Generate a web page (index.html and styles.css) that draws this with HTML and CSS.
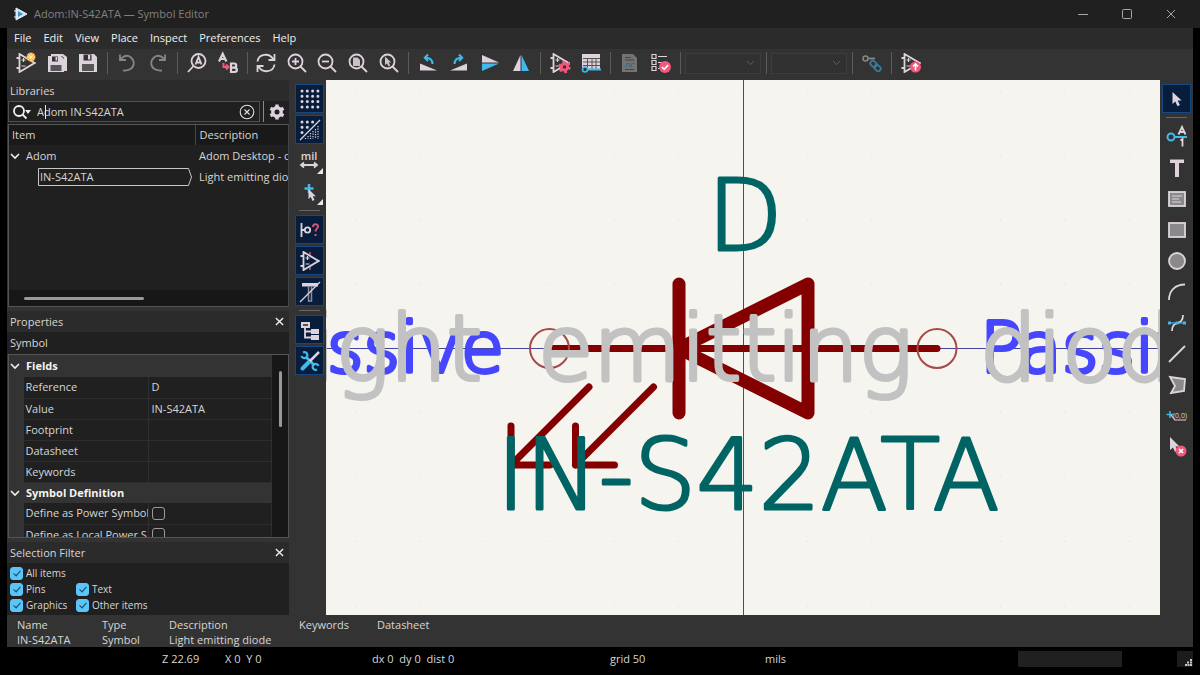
FILE: index.html
```html
<!DOCTYPE html>
<html lang="en">
<head>
<meta charset="utf-8">
<title>Adom:IN-S42ATA — Symbol Editor</title>
<link rel="stylesheet" href="styles.css">
</head>
<body>
<svg class="defs" aria-hidden="true">
  <symbol id="amp" viewBox="0 0 20 20"><path class="ln" d="M3.500 1v18l15-9zM.5 5h3M.5 15h3M17 10h2.500"/><path class="ln thin" d="M5.500 7h4M7.500 5v4M5.500 13h4"/></symbol>
  <symbol id="lens" viewBox="0 0 20 20"><circle class="ln" cx="8.500" cy="8.500" r="7"/><path class="ln" d="M13.500 13.500l5.500 5.500"/></symbol>
  <symbol id="pointer" viewBox="0 0 20 20"><path class="fl" d="M5.500 3v12l2.800-2.600 2.200 4.800 2.400-1.100-2.200-4.700h3.900z"/></symbol>
  <symbol id="x" viewBox="0 0 10 10"><path d="M1 1l8 8M9 1l-8 8"/></symbol>
  <symbol id="chev" viewBox="0 0 10 10"><path d="M1 3l4 4 4-4"/></symbol>
</svg>

<div class="window">
  <header class="titlebar">
    <svg class="app-icon" viewBox="0 0 14 14"><path d="M2 1l11 6-11 6z" fill="#cfe6f4" stroke="#e6eef4"/><path d="M0 4h4M0 10h4" stroke="#e6eef4"/><path d="M4 4l5 3-5 3z" fill="#3b93c8"/></svg>
    <h1>Adom:IN-S42ATA — Symbol Editor</h1>
    <div class="window-buttons">
      <button aria-label="Minimize"><svg viewBox="0 0 10 10"><path d="M0 5.500h10"/></svg></button>
      <button aria-label="Maximize"><svg viewBox="0 0 10 10"><rect x=".5" y=".5" width="9" height="9" rx="1"/></svg></button>
      <button aria-label="Close"><svg><use href="#x"/></svg></button>
    </div>
  </header>

  <div class="frame">
    <nav class="menubar">
      <button>File</button><button>Edit</button><button>View</button><button>Place</button><button>Inspect</button><button>Preferences</button><button>Help</button>
    </nav>

    <div class="toolbar" role="toolbar">
      <div class="group three">
        <button aria-label="New symbol"><svg class="ic"><use href="#amp"/><g transform="translate(15 4)"><circle r="4.500" fill="#f5a52a"/><path d="M0-4v8M-4 0h8M-3-3l6 6M3-3l-6 6" stroke="#fff0c8" stroke-width="1"/></g></svg></button>
        <button aria-label="Save all"><svg class="ic"><path class="fl" d="M4 1h12l4 3v14h-3V5l-2-2H4z"/><path class="fl" d="M1 3h13l3 3v13H1z"/><path fill="#333" d="M5 3.500h6v5H5z"/><path class="fl" d="M8.500 4h1.800v3.500H8.500z"/><path fill="#555" d="M3.500 12h11v6h-11z"/></svg></button>
        <button aria-label="Save"><svg class="ic"><path class="fl" d="M1 1h15l3 3v15H1z"/><path fill="#333" d="M5.500 1.500h8v6h-8z"/><path class="fl" d="M10 2h2.200v4.500H10z"/><path fill="#555" d="M4 11h12v7H4z"/></svg></button>
      </div>
      <i class="sep"></i>
      <div class="group two">
        <button aria-label="Undo"><svg class="ic dim"><path class="ln" d="M3 1.500V7h6M3.500 6.500C7 2.500 11 2 14 4.500c4 3.500 3.500 9-.5 11.500-2.500 1.500-5 1.800-7.500 1.500"/></svg></button>
        <button aria-label="Redo"><svg class="ic dim"><path class="ln" d="M17 1.500V7h-6M16.500 6.500C13 2.500 9 2 6 4.500c-4 3.500-3.500 9 .5 11.500 2.500 1.500 5 1.800 7.500 1.500"/></svg></button>
      </div>
      <i class="sep"></i>
      <div class="group two">
        <button aria-label="Find"><svg class="ic"><circle class="ln" cx="11.500" cy="8" r="7"/><path class="ln" d="M6.500 13l-5.500 6"/><path class="ln" d="M8.500 11.500l3-7.500 3 7.500M9.500 9.500h4"/></svg></button>
        <button aria-label="Find and replace"><svg class="ic"><path class="ln bold" d="M1 8.500L4.700.8l3.700 7.700M2.300 6h4.800M13 10.500v8.500h3.500c3.200 0 3.200-4.300 0-4.300H13h3c3 0 3-4.200 0-4.200z"/><path d="M5.500 10v4H10M8 11.500l2.500 2.500L8 16.500" fill="none" stroke="#f2587c" stroke-width="2"/></svg></button>
      </div>
      <i class="sep"></i>
      <div class="group five">
        <button aria-label="Refresh"><svg class="ic"><path class="ln" d="M1.500 8.500C2.500 1 13 -1 17.500 6.500M18.500 1v6h-6M18.500 11.500C17.500 19 7 21 2.500 13.500M1.500 19v-6h6"/></svg></button>
        <button aria-label="Zoom in"><svg class="ic"><use href="#lens"/><path class="ln" d="M5 8.500h7M8.500 5v7"/></svg></button>
        <button aria-label="Zoom out"><svg class="ic"><use href="#lens"/><path class="ln" d="M5 8.500h7"/></svg></button>
        <button aria-label="Zoom to fit"><svg class="ic"><use href="#lens"/><path d="M5 4.500h4.500l2.500 2.500v6H5z" fill="#c9c2c8"/></svg></button>
        <button aria-label="Zoom to selection"><svg class="ic"><use href="#lens"/><path d="M6 3.500v8.500l2-1.600 1.600 3 1.600-.8-1.500-3h2.600z" fill="#c9c2c8"/></svg></button>
      </div>
      <i class="sep"></i>
      <div class="group four">
        <button aria-label="Rotate counterclockwise"><svg class="ic"><path class="fl" d="M2 10.500v7h17z"/><path class="bl" d="M14.500 11c0-4.500-3-6.500-7.500-6.200M10 1.500L6.800 4.800 10 8"/></svg></button>
        <button aria-label="Rotate clockwise"><svg class="ic"><path class="fl" d="M18 10.500v7H1z"/><path class="bl" d="M5.500 11c0-4.500 3-6.500 7.500-6.200M10 1.500l3.200 3.300L10 8"/></svg></button>
        <button aria-label="Mirror vertically"><svg class="ic"><path class="fl" d="M2 2l17 7.500H2z"/><path fill="#42b8eb" d="M2 10.500h17L2 18z"/></svg></button>
        <button aria-label="Mirror horizontally"><svg class="ic"><path class="fl" d="M9.500 2v16H2z"/><path fill="#42b8eb" d="M10.500 2v16H18z"/></svg></button>
      </div>
      <i class="sep"></i>
      <div class="group two">
        <button aria-label="Symbol properties"><svg class="ic"><use href="#amp"/><circle cx="14.500" cy="14" r="3.200" fill="#333" stroke="#f2587c" stroke-width="3"/><circle cx="14.500" cy="14" r="5" fill="none" stroke="#f2587c" stroke-width="2.400" stroke-dasharray="2.600 2.630"/></svg></button>
        <button aria-label="Pin table"><svg class="ic"><path class="fl" d="M1 1h18v15H1z"/><path d="M2 5.500h17M2 9h17M2 12.500h17M6.500 5v11M11 5v11M15 5v11" stroke="#555" /><circle cx="4" cy="16.500" r="2.500" fill="#333" stroke="#42b8eb" stroke-width="1.600"/><path class="bl" d="M6.500 16.500H20"/></svg></button>
      </div>
      <i class="sep"></i>
      <div class="group two">
        <button aria-label="Show datasheet" disabled><svg class="ic"><path d="M2 1h11l4 4v14H2z" fill="#737373"/><path d="M5 4.500h6M5 7h9M5 16.500h9" stroke="#444"/><path d="M4.500 13.500h2v-3h3v3h2v-3h3" fill="none" stroke="#2f6c88"/></svg></button>
        <button aria-label="Check symbol"><svg class="ic"><path class="ln thin" d="M1 1.500h4v4H1zM1 7.500h4v4H1zM1 13.500h4v4H1zM7 3.500h9M7 9.500h5M7 15.500h2"/><circle cx="14" cy="14" r="6" fill="#f2587c"/><path d="M11 14l2.200 2.300 4-4.300" fill="none" stroke="#fff" stroke-width="1.700"/></svg></button>
      </div>
      <i class="sep"></i>
      <select disabled aria-label="Body style"><option></option></select>
      <i class="sep"></i>
      <select disabled aria-label="Unit"><option></option></select>
      <i class="sep"></i>
      <button aria-label="Synchronized pins mode" disabled><svg class="ic"><circle cx="3.500" cy="5.500" r="2.500" fill="none" stroke="#888" stroke-width="1.500"/><path d="M6 5.500h7" stroke="#888" stroke-width="1.800"/><g fill="none" stroke="#3a7b98" stroke-width="1.800"><rect x="8" y="8.500" width="7" height="5" rx="2.500" transform="rotate(45 11.500 11)"/><rect x="12" y="12.500" width="7" height="5" rx="2.500" transform="rotate(45 15.500 15)"/></g></svg></button>
      <i class="sep"></i>
      <button aria-label="Add symbol to schematic"><svg class="ic"><use href="#amp"/><circle cx="14.500" cy="14" r="5.500" fill="#f2587c"/><path d="M14.500 17.500v-6M12 13.500l2.500-2.500 2.500 2.500" fill="none" stroke="#fff" stroke-width="1.600"/></svg></button>
    </div>

    <main class="workspace">
      <aside class="side">
        <section class="libraries">
          <h2>Libraries</h2>
          <div class="search-row">
            <label class="search">
              <svg class="search-icon" viewBox="0 0 20 16"><circle cx="7" cy="7" r="5"/><path d="M10.500 10.500l4 4"/><path class="tri" d="M13 6h6l-3 4z"/></svg>
              <input type="text" value="Adom IN-S42ATA" aria-label="Search libraries">
              <i class="caret"></i>
              <button aria-label="Clear search"><svg viewBox="0 0 16 16"><circle cx="8" cy="8" r="6.800"/><path d="M5.500 5.500l5 5M10.500 5.500l-5 5"/></svg></button>
            </label>
            <button class="gear" aria-label="Library options"><svg viewBox="0 0 16 16"><circle cx="8" cy="8" r="4.200" stroke-width="3.400"/><path stroke-width="3.400" d="M8 .5v3M8 12.500v3M1.500 4.250l2.600 1.500M11.900 10.250l2.600 1.500M1.500 11.750l2.600-1.500M11.900 5.750l2.600-1.500"/></svg></button>
          </div>
          <div class="tree">
            <table>
              <thead><tr><th>Item</th><th>Description</th></tr></thead>
              <tbody>
                <tr><td><svg class="chev"><use href="#chev"/></svg><span>Adom</span></td><td>Adom Desktop - c</td></tr>
                <tr><td class="leaf"><div class="picked"><svg viewBox="0 0 154 18" preserveAspectRatio="none"><path d="M.5.5h150l3 8.500-3 8.500H.5z"/></svg>IN-S42ATA</div></td><td>Light emitting diode</td></tr>
              </tbody>
            </table>
            <div class="hscroll"><i></i></div>
          </div>
        </section>

        <section class="properties">
          <h2>Properties<button aria-label="Close properties"><svg><use href="#x"/></svg></button></h2>
          <p>Symbol</p>
          <div class="propgrid">
            <table>
              <colgroup><col class="c-gutter"><col class="c-name"><col></colgroup>
              <tbody>
                <tr class="section"><th colspan="3"><svg class="chev"><use href="#chev"/></svg><span>Fields</span></th></tr>
                <tr><td class="gutter"></td><td>Reference</td><td>D</td></tr>
                <tr><td class="gutter"></td><td>Value</td><td>IN-S42ATA</td></tr>
                <tr><td class="gutter"></td><td>Footprint</td><td></td></tr>
                <tr><td class="gutter"></td><td>Datasheet</td><td></td></tr>
                <tr><td class="gutter"></td><td>Keywords</td><td></td></tr>
                <tr class="section"><th colspan="3"><svg class="chev"><use href="#chev"/></svg><span>Symbol Definition</span></th></tr>
                <tr><td class="gutter"></td><td><label for="power">Define as Power Symbol</label></td><td><input type="checkbox" id="power"></td></tr>
                <tr><td class="gutter"></td><td><label for="local">Define as Local Power S</label></td><td><input type="checkbox" id="local"></td></tr>
              </tbody>
            </table>
            <div class="vscroll"><i></i></div>
          </div>
        </section>

        <section class="filter">
          <h2>Selection Filter<button aria-label="Close selection filter"><svg><use href="#x"/></svg></button></h2>
          <div class="checks">
            <label class="wide"><input type="checkbox" checked>All items</label>
            <label><input type="checkbox" checked>Pins</label>
            <label><input type="checkbox" checked>Text</label>
            <label><input type="checkbox" checked>Graphics</label>
            <label><input type="checkbox" checked>Other items</label>
          </div>
        </section>
      </aside>

      <div class="tools left" role="toolbar">
        <button class="on" aria-label="Show grid"><svg class="ic"><path class="dots" d="M2 2h17M2 7.300h17M2 12.600h17M2 17.900h17"/></svg></button>
        <button class="on" aria-label="Grid overrides"><svg class="ic"><path class="dots" d="M2 2h12M2 7.300h7M2 12.600h3"/><path class="ln thin" d="M0 20L20 0"/><path class="fine" d="M18 6v13M15.500 9v10M13 11v8M10.500 13v6M8 16v3M5.500 18v1"/></svg></button>
        <button class="more" aria-label="Units: mil"><svg class="ic"><text x="9" y="9" text-anchor="middle" class="mil">mil</text><path class="ln" d="M1 14h16M4 11.500L1 14l3 2.500M14 11.500l3 2.500-3 2.500"/></svg></button>
        <button class="more" aria-label="Cursor shape"><svg class="ic"><path d="M9 2v9M4.500 6.500h9" stroke="#42b8eb" stroke-width="2.500"/><path class="fl" d="M8.500 7v10l2.300-2 1.700 4 2-1-1.700-3.700h3z"/></svg></button>
        <i class="sep"></i>
        <button class="on" aria-label="Show pin electrical types"><svg class="ic"><path class="ln" d="M1.500 3v14M2 10h3"/><circle class="ln" cx="7.500" cy="10" r="2.700"/><path d="M13 7c0-3.500 5-3.500 5-.5 0 2-2.500 2.300-2.500 5M15.500 14v2" fill="none" stroke="#d8506f" stroke-width="2"/></svg></button>
        <button class="on" aria-label="Show hidden pins"><svg class="ic"><path d="M10 1v4M10 15v4" stroke="#d8506f" stroke-width="1.500"/><use href="#amp"/></svg></button>
        <button class="on" aria-label="Show hidden fields"><svg class="ic"><path class="fl" d="M2 1h16v3.500H2z"/><path d="M8.500 4.500V19h3V4.500" fill="none" stroke="#8e8c98" stroke-width="1.500"/><path class="ln thin" d="M0 20L20 0"/></svg></button>
        <i class="sep"></i>
        <button class="on" aria-label="Show library tree"><svg class="ic"><path class="fl" d="M1 2h9v6H1zM11 9h8v5h-8zM11 15h8v5h-8z"/><path d="M3 4h5v2H3z" fill="#555"/><path class="ln" d="M5 8v9.500h6M5 11.500h6"/></svg></button>
        <button class="on" aria-label="Show properties"><svg class="ic"><path d="M5.500 5.500l9 9" stroke="#42b8eb" stroke-width="3"/><path d="M3 1.500a3 3 0 1 1-1.500 3.500M17 18.500a3 3 0 1 1 1.500-3.500" fill="none" stroke="#42b8eb" stroke-width="2.200"/><path d="M19 1l-9.500 9.500" stroke="#ded3dd" stroke-width="2.500"/><path d="M8.500 11.500l-6 6" stroke="#42b8eb" stroke-width="4" stroke-linecap="round"/></svg></button>
      </div>

      <svg class="canvas" viewBox="326 80 834 535" preserveAspectRatio="xMidYMid slice">
        <g class="grid-dots">
          <path d="M356 219.500H1160M356 284H1160M356 412.500H1160M356 477H1160M356 541.500H1160M356 606H1160M356 155H1160M356 91H1160"/>
        </g>
        <path class="cross" d="M743.500 80V615M326 348.500H1160"/>
        <g class="pin-type">
          <text x="504" y="372" text-anchor="end">Passive</text>
          <text x="980" y="372">Passive</text>
        </g>
        <g class="body">
          <path class="thick" d="M679 284v129M808 284v129L679 348.500z"/>
          <path d="M549.500 348.500H937M589 387l-78 78M511 426v39h39M653.500 387l-78 78M575.500 426v39h39"/>
        </g>
        <g class="pin-end"><circle cx="549.500" cy="348.500" r="19.500"/><circle cx="937" cy="348.500" r="19.500"/></g>
        <g class="value">
          <text x="745" y="250" text-anchor="middle">D</text>
          <text x="748" y="509" text-anchor="middle">IN-S42ATA</text>
        </g>
        <g class="desc">
          <text x="482" y="380" text-anchor="end">Light</text>
          <text x="538" y="380">emitting</text>
          <text x="980" y="380">diode</text>
        </g>
      </svg>

      <div class="tools right" role="toolbar">
        <button class="on" aria-label="Select"><svg class="ic"><use href="#pointer"/></svg></button>
        <i class="sep"></i>
        <div class="stack">
          <button aria-label="Add pin"><svg class="ic"><circle class="bl" cx="4" cy="10" r="3.500"/><path class="bl" d="M7.500 10H20"/><path class="ln" d="M11.500 7.500L15 0l3.500 7.500M12.500 5h5M13.500 13.500L15.500 12v7.500"/></svg></button>
          <button aria-label="Add text"><svg class="ic"><path class="fl" d="M3 1.500h14V5h-5v14H8V5H3z"/></svg></button>
          <button aria-label="Add text box"><svg class="ic"><rect class="shape" x="2" y="3" width="16" height="14"/><path class="ln thin" d="M5 7h10M5 10h7M5 13h9"/></svg></button>
          <button aria-label="Add rectangle"><svg class="ic"><rect class="shape" x="2" y="3" width="16" height="14"/></svg></button>
          <button aria-label="Add circle"><svg class="ic"><circle class="shape" cx="10" cy="10" r="8"/></svg></button>
          <button aria-label="Add arc"><svg class="ic"><path class="ln" d="M2 18C2 9 8 2.500 18 2.500"/></svg></button>
          <button aria-label="Add bezier"><svg class="ic"><path class="ln" d="M5 18c0-12 11-4 11-16"/><path class="bl thin" d="M2 10h16"/><path d="M1 8.500h3v3H1zM8.500 8.500h3v3h-3zM16 8.500h3v3h-3z" fill="#42b8eb"/></svg></button>
          <button aria-label="Add line"><svg class="ic"><path class="ln" d="M2 18L18 2"/></svg></button>
          <button aria-label="Add polygon"><svg class="ic"><path class="shape" d="M3 2l15 2-1 12-13 2 4-7z"/></svg></button>
          <button aria-label="Set anchor"><svg class="ic"><path d="M3 5v7M-.5 8.500h7" stroke="#42b8eb" stroke-width="1.500"/><path class="ln thin" d="M4 9l4 5h11"/><text x="6" y="12" class="coords">(0,0)</text></svg></button>
          <button aria-label="Delete"><svg class="ic"><path class="fl" d="M3 0v13l3-2.500 2 4.500 2.500-1.500-2-4h4z"/><circle cx="14" cy="14" r="5.500" fill="#f2587c"/><path d="M12 12l4 4M16 12l-4 4" stroke="#fff" stroke-width="1.700"/></svg></button>
        </div>
      </div>
    </main>

    <dl class="message">
      <div><dt>Name</dt><dd>IN-S42ATA</dd></div>
      <div><dt>Type</dt><dd>Symbol</dd></div>
      <div><dt>Description</dt><dd>Light emitting diode</dd></div>
      <div><dt>Keywords</dt><dd></dd></div>
      <div><dt>Datasheet</dt><dd></dd></div>
    </dl>

    <footer class="status">
      <span></span><span>Z 22.69</span><span>X 0&nbsp; Y 0</span><span>dx 0&nbsp; dy 0&nbsp; dist 0</span><span>grid 50</span><span>mils</span><span class="busy"></span>
      <svg class="grip" viewBox="0 0 16 16"><path d="M13 8h2v2h-2zM10 10.500h2v2h-2zM13 10.500h2v2h-2zM8 13h2v2H8zM10.500 13h2v2h-2zM13 13h2v2h-2z"/></svg>
    </footer>
  </div>
</div>
</body>
</html>
```

FILE: styles.css
```css
* { box-sizing: border-box; }
html, body { height: 100%; }
body {
  margin: 0;
  background: #000;
  color: #d6d6d6;
  font: 11px/16px "Open Sans", "Noto Sans", sans-serif;
  overflow: hidden;
}
h1, h2, p, dl, dd { margin: 0; font-size: inherit; font-weight: 400; }
button, input, select { font: inherit; color: inherit; }
button { padding: 0; border: 0; background: none; display: flex; align-items: center; justify-content: center; }
i { display: block; }
table { border-collapse: collapse; table-layout: fixed; }
th, td { padding: 0; text-align: left; font-weight: 400; white-space: nowrap; overflow: hidden; }
.defs { position: absolute; width: 0; height: 0; }

.window { height: 100vh; display: flex; flex-direction: column; }

.titlebar { height: 28px; display: flex; align-items: center; background: #202020; color: #808080; padding: 0 7px 0 14px; flex: none; }
.app-icon { width: 14px; height: 14px; margin-right: 6px; }
.window-buttons { display: flex; margin-left: auto; }
.window-buttons button { width: 44px; height: 28px; }
.window-buttons svg { width: 10px; height: 10px; fill: none; stroke: #a8a8a8; }

.frame { flex: 1; min-height: 0; margin: 0 7px; display: flex; flex-direction: column; }

.menubar { height: 21px; flex: none; display: flex; align-items: flex-start; gap: 12px; padding: 2px 0 0 7px; background: #2b2b2b; color: #f0f0f0; }

.toolbar { height: 31px; flex: none; display: flex; align-items: center; padding: 0 0 3px 4px; background: #333; }
.toolbar button { width: 31px; height: 28px; flex: none; }
.group { display: flex; flex: none; }
.toolbar .group button { flex: 1; }
.two { width: 62px; }
.three { width: 92px; }
.four { width: 124px; }
.five { width: 153px; }
.toolbar .sep { width: 8px; height: 22px; flex: none; background: linear-gradient(#5c5c5c, #5c5c5c) center / 1px 100% no-repeat; }
.toolbar select {
  width: 76px; height: 21px; margin: 0 1px; border: 1px solid #3d3d3d; appearance: none; opacity: 1;
  background: linear-gradient(45deg, transparent 42%, #5c5c5c 42% 56%, transparent 56%) right 9px center / 4px 4px no-repeat,
    linear-gradient(-45deg, transparent 42%, #5c5c5c 42% 56%, transparent 56%) right 6px center / 4px 4px no-repeat, #313131;
}

.ic { width: 20px; height: 20px; flex: none; overflow: visible; }
.ln { fill: none; stroke: #ded3dd; stroke-width: 1.8; }
.fl { fill: #ded3dd; }
.bl { fill: none; stroke: #42b8eb; stroke-width: 2; }
.thin { stroke-width: 1.2; }
.bold { stroke-width: 2.2; }
.dim { opacity: .5; }
.shape { fill: #8a8a8a; stroke: #ded3dd; stroke-width: 1.8; }
.dots { stroke: #ded3dd; stroke-width: 3; stroke-linecap: round; stroke-dasharray: 0 5.3; }
.fine { stroke: #ded3dd; stroke-width: 1.2; stroke-dasharray: 1.2 1.3; }
.mil { font: 600 11px "Open Sans", sans-serif; fill: #ded3dd; }
.coords { font: 7px "Open Sans", sans-serif; fill: #ded3dd; }

.workspace { flex: 1; min-height: 0; display: flex; background: #333; }

.side { width: 282px; flex: none; display: flex; flex-direction: column; gap: 4px; background: #333; }
.side h2 { height: 21px; display: flex; align-items: center; justify-content: space-between; padding: 0 4px 0 3px; background: #2b2b2b; }
.side h2 button { width: 11px; height: 11px; }
.side h2 svg { width: 9px; height: 9px; stroke: #f0f0f0; stroke-width: 1.5; }

.search-row { height: 23px; display: flex; padding: 0 0 2px 1px; background: #202020; }
.search { position: relative; flex: 1; display: flex; align-items: center; border: 1px solid #505050; padding: 0 4px 0 3px; margin-right: 3px; }
.search-icon { width: 20px; height: 16px; fill: none; stroke: #f0f0f0; stroke-width: 1.8; }
.search-icon .tri { fill: #f0f0f0; stroke: none; }
.search input { flex: 1; min-width: 0; height: 19px; padding: 0 5px; border: 0; background: none; outline: 0; }
.search button { width: 16px; height: 16px; }
.search button svg { width: 16px; height: 16px; fill: none; stroke: #e0e0e0; stroke-width: 1.1; }
.caret { position: absolute; left: 36px; top: 3px; width: 1px; height: 14px; background: #e8e8e8; }
.gear { width: 26px; border-left: 1px solid #8a8a8a; }
.gear svg { width: 16px; height: 16px; fill: none; stroke: #ded3dd; }

.tree { height: 183px; margin: 0 0 0 1px; border: 1px solid #555; border-right-color: #444; background: #202020; display: flex; flex-direction: column; overflow: hidden; }
.tree table { width: 279px; }
.tree th { height: 20px; background: #191919; padding-left: 4px; }
.tree th:first-child { width: 186px; padding-left: 3px; border-right: 1px solid #484848; }
.tree td { height: 21px; padding-left: 4px; }
.tree td:first-child { padding-left: 2px; }
.tree td.leaf { padding-left: 29px; }
.chev { width: 10px; height: 10px; margin: 0 6px 0 -1px; vertical-align: -1px; fill: none; stroke: #f0f0f0; stroke-width: 1.6; }
.picked { position: relative; width: 154px; height: 18px; padding-left: 2px; line-height: 18px; }
.picked svg { position: absolute; inset: 0; width: 100%; height: 100%; fill: none; stroke: #c8c8c8; }
.hscroll { margin-top: auto; height: 16px; padding: 7px 15px; background: #171717; }
.hscroll i { width: 120px; height: 3px; border-radius: 2px; background: #9a9a9a; }

.properties { flex: 1; min-height: 0; display: flex; flex-direction: column; }
.properties p { height: 22px; padding: 3px; background: #202020; }
.propgrid { flex: 1; min-height: 0; margin-left: 1px; border: 1px solid #555; display: flex; align-items: flex-start; overflow: hidden; background: #202020; }
.propgrid table { flex: 1; width: 263px; }
.c-gutter { width: 14px; }
.c-name { width: 125px; }
.propgrid td, .propgrid th { height: 21px; }
.propgrid td { padding-left: 3px; border-bottom: 1px solid #2e2e2e; border-right: 1px solid #2e2e2e; }
.propgrid td.gutter { background: #333; padding: 0; border-color: #333; }
.propgrid td:nth-child(2) { padding-left: 2px; }
.propgrid .section th { background: #333; font-weight: 700; padding-left: 2px; color: #f4f4f4; }
.propgrid .section:first-child th { height: 22px; }
.vscroll { width: 16px; flex: none; align-self: stretch; background: #171717; padding: 16px 7px; }
.vscroll i { width: 3px; height: 56px; border-radius: 2px; background: #9a9a9a; }

input[type="checkbox"] { appearance: none; width: 13px; height: 13px; margin: 0; border: 1px solid #9a9a9a; border-radius: 3px; display: block; flex: none; }
input[type="checkbox"]:checked { background: #5bc4f8; border-color: #5bc4f8; }
input[type="checkbox"]:checked::before { content: ""; display: block; width: 3px; height: 6px; margin: 1px 0 0 4px; border: solid #15445c; border-width: 0 1px 1px 0; transform: rotate(42deg); }

.checks { display: grid; grid-template-columns: 66px 1fr; padding: 2px 0 2px 3px; background: #202020; font-size: 10px; }
.checks label { height: 16px; display: flex; align-items: center; gap: 3px; }
.checks .wide { grid-column: 1 / -1; }

.tools { flex: none; display: flex; flex-direction: column; align-items: center; gap: 2px; padding-top: 4px; background: #333; }
.left { width: 37px; padding-left: 4px; }
.right { width: 33px; }
.tools button { position: relative; width: 29px; height: 29px; flex: none; border: 1px solid transparent; }
.tools .on { background: #071d3b; border-color: #17477f; }
.tools .sep { width: 21px; height: 5px; background: linear-gradient(#666, #666) center / 100% 1px no-repeat; }
.more::after { content: ""; position: absolute; right: 0; bottom: 0; border: 3px solid #e8e8e8; border-top-color: transparent; border-left-color: transparent; }
.stack { height: 340px; display: grid; grid-auto-rows: 1fr; align-items: center; }

.canvas { flex: 1; min-width: 0; height: 100%; background: #f5f4ef; }
.canvas text { font-family: "DejaVu Sans", "DejaVu Sans Light", sans-serif; font-weight: 200; stroke-linejoin: round; }
.grid-dots path { stroke: #dcdcd8; stroke-width: 1; stroke-dasharray: 1 63.4; }
.cross { stroke: #4545a0; stroke-width: 1; }
.pin-type { fill: #4646ff; stroke: #4646ff; stroke-width: 4; font-size: 70px; }
.body { fill: none; stroke: #840000; stroke-width: 7; stroke-linecap: round; stroke-linejoin: round; }
.body .thick { stroke-width: 13; }
.pin-end { fill: none; stroke: #a84848; stroke-width: 2; }
.value { fill: #006464; stroke: #006464; stroke-width: 3; font-size: 98px; }
.desc { fill: #c2c2c2; stroke: #c2c2c2; stroke-width: 4; font-size: 90px; }

.message { height: 32px; flex: none; display: grid; grid-template-columns: 85px 67px 130px 78px 1fr; padding: 2px 0 0 10px; background: #333; }
.message dt, .message dd { line-height: 15px; }

.status { height: 28px; flex: none; display: grid; grid-template-columns: 155fr 63fr 147fr 238fr 155fr 253fr 104fr 55fr 16px; padding-top: 4px; }
.busy { height: 16px; background: #202020; }
.grip { grid-column: 9; width: 16px; height: 16px; background: #1c1c1c; fill: #c8c8c8; }
```
